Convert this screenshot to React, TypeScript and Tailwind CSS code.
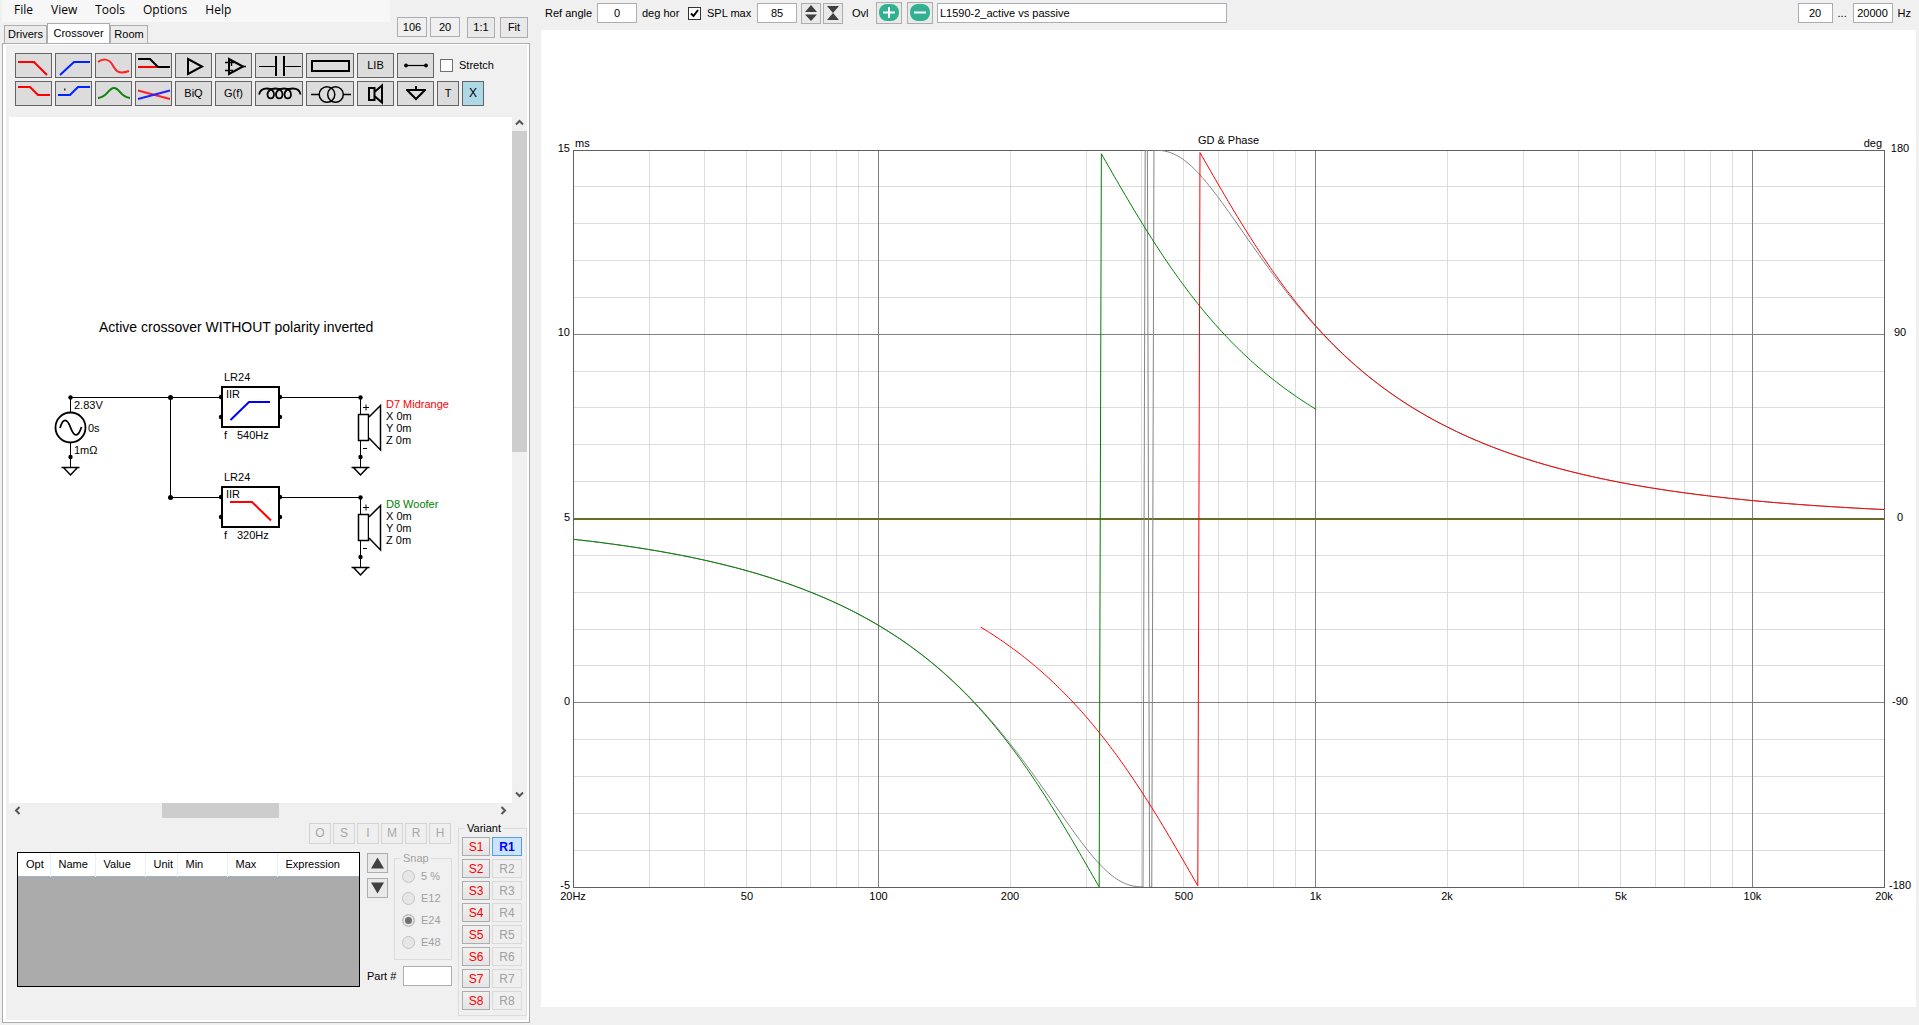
import React from 'react';

type Point = [number, number];

const menus = ['File', 'View', 'Tools', 'Options', 'Help'];
const modes = ['O', 'S', 'I', 'M', 'R', 'H'];
const snaps = ['5 %', 'E12', 'E24', 'E48'];
const variants = [1, 2, 3, 4, 5, 6, 7, 8];

const columns = [
  { label: 'Opt', width: 'w-[32px]' },
  { label: 'Name', width: 'w-[45px]' },
  { label: 'Value', width: 'w-[50px]' },
  { label: 'Unit', width: 'w-[32px]' },
  { label: 'Min', width: 'w-[50px]' },
  { label: 'Max', width: 'w-[50px]' },
  { label: 'Expression', width: 'w-auto' },
];

/* ---------- chart maths ---------- */

const F_MIN = 20;
const F_MAX = 20000;
const STEPS = 598;

const freqAt = (i: number) => F_MIN * Math.pow(F_MAX / F_MIN, i / STEPS);
const xPct = (f: number) => (Math.log10(f / F_MIN) / Math.log10(F_MAX / F_MIN)) * 100;
const yPct = (deg: number) => ((180 - deg) / 360) * 100;

const wrap = (deg: number) => {
  let d = deg;
  while (d >= 180) d -= 360;
  while (d < -180.2) d += 360;
  return d;
};

// Phase of a 4th order Linkwitz-Riley section, same for low and high pass
const lrPhase = (f: number, fc: number) => {
  const x = f / fc;
  return (-2 * Math.atan2(Math.SQRT2 * x, 1 - x * x) * 180) / Math.PI;
};

const sumPhase = (f: number) => {
  const lowMag = 1 / (1 + Math.pow(f / 320, 4));
  const highMag = 1 - 1 / (1 + Math.pow(f / 540, 4));
  const a = (lrPhase(f, 320) * Math.PI) / 180;
  const b = (lrPhase(f, 540) * Math.PI) / 180;
  const re = lowMag * Math.cos(a) + highMag * Math.cos(b);
  const im = lowMag * Math.sin(a) + highMag * Math.sin(b);
  return (Math.atan2(im, re) * 180) / Math.PI;
};

function trace(phase: (f: number) => number, from: number, to: number) {
  const pts: Point[] = [];
  for (let i = 0; i <= STEPS; i++) {
    const f = freqAt(i);
    if (f >= from && f <= to) pts.push([xPct(f) * 10, yPct(wrap(phase(f))) * 10]);
  }
  return pts.map(([x, y]) => `${x.toFixed(2)},${y.toFixed(2)}`).join(' ');
}

const decades = [100, 1000, 10000];
const minorFreqs = [10, 100, 1000, 10000]
  .flatMap((dec) => [2, 3, 4, 5, 6, 7, 8, 9].map((m) => m * dec))
  .filter((f) => f > F_MIN && f < F_MAX);

const xLabels: [number, string][] = [
  [20, '20Hz'], [50, '50'], [100, '100'], [200, '200'], [500, '500'],
  [1000, '1k'], [2000, '2k'], [5000, '5k'], [10000, '10k'], [20000, '20k'],
];

const yLabels: [number, string, string][] = [
  [180, '15', '180'],
  [90, '10', '90'],
  [0, '5', '0'],
  [-90, '0', '-90'],
  [-180, '-5', '-180'],
];

function PhaseChart() {
  return (
    <svg
      className="block h-full w-full overflow-visible text-[11px]"
      role="img"
      aria-label="GD & Phase"
    >
      <g shapeRendering="crispEdges" strokeWidth="1">
        {minorFreqs.map((f) => (
          <line key={f} x1={`${xPct(f)}%`} x2={`${xPct(f)}%`} y1="0" y2="100%" stroke="#dcdcdc" />
        ))}
        {Array.from({ length: 19 }, (_, i) => i + 1).filter((i) => i % 5).map((i) => (
          <line key={i} x1="0" x2="100%" y1={`${i * 5}%`} y2={`${i * 5}%`} stroke="#dcdcdc" />
        ))}
        {decades.map((f) => (
          <line key={f} x1={`${xPct(f)}%`} x2={`${xPct(f)}%`} y1="0" y2="100%" stroke="#808080" />
        ))}
        <line x1="0" x2="100%" y1="25%" y2="25%" stroke="#808080" />
        <line x1="0" x2="100%" y1="75%" y2="75%" stroke="#808080" />
        <rect x="0" y="0" width="100%" height="100%" fill="none" stroke="#606060" />
        <line x1="0" x2="100%" y1="50%" y2="50%" stroke="#6b6b28" strokeWidth="2" />
      </g>

      <svg x="0" y="0" width="100%" height="100%" viewBox="0 0 1000 1000"
        preserveAspectRatio="none" fill="none" strokeWidth="1">
        <polyline points={trace(sumPhase, 20, 20000)} stroke="#848484" vectorEffect="non-scaling-stroke" />
        <polyline points={trace((f) => lrPhase(f, 320), 20, 1005)} stroke="#008000" vectorEffect="non-scaling-stroke" />
        <polyline points={trace((f) => lrPhase(f, 540), 171, 20000)} stroke="#ff0000" vectorEffect="non-scaling-stroke" />
      </svg>

      <g fill="#000">
        <text x="50%" y="-6" textAnchor="middle">GD &amp; Phase</text>
        <text x="2" y="-3">ms</text>
        <text x="100%" y="-3" dx="-2" textAnchor="end">deg</text>
        {xLabels.map(([f, label]) => (
          <text key={f} x={`${xPct(f)}%`} y="100%" dy="13" textAnchor="middle">{label}</text>
        ))}
        {yLabels.map(([deg, left, right]) => (
          <React.Fragment key={deg}>
            <text x="-3" y={`${yPct(deg)}%`} dy="2" textAnchor="end">{left}</text>
            <text x="100%" dx="16" y={`${yPct(deg)}%`} dy="2" textAnchor="middle">{right}</text>
          </React.Fragment>
        ))}
      </g>
    </svg>
  );
}

/* ---------- schematic ---------- */

function Ground({ x, y }: { x: number; y: number }) {
  return (
    <g>
      <path d={`M${x} ${y - 27}V${y}`} stroke="#000" />
      <circle cx={x} cy={y - 10} r="2.2" />
      <path d={`M${x - 9} ${y + 0.5}H${x + 9}M${x - 7} ${y + 0.5}L${x} ${y + 8}L${x + 7} ${y + 0.5}`}
        fill="none" stroke="#000" strokeWidth="1.5" />
    </g>
  );
}

function FilterBlock({ y, freq, color, shape }: { y: number; freq: string; color: string; shape: string }) {
  return (
    <g transform={`translate(212 ${y})`}>
      {[11, 31].map((cy) => (
        <React.Fragment key={cy}>
          <circle cx="0" cy={cy} r="2.2" />
          <circle cx="59" cy={cy} r="2.2" />
        </React.Fragment>
      ))}
      <rect x="1" y="1" width="57" height="40" fill="#fff" stroke="#000" strokeWidth="2" />
      <path d={shape} fill="none" stroke={color} strokeWidth="2" />
      <text x="3" y="-5">LR24</text>
      <text x="5" y="12">IIR</text>
      <text x="3" y="53">f</text>
      <text x="16" y="53">{freq}</text>
    </g>
  );
}

function Driver({ y, name, color }: { y: number; name: string; color: string }) {
  return (
    <g transform={`translate(0 ${y})`}>
      <path d="M271 .5H351.5V18" fill="none" stroke="#000" />
      <circle cx="351.5" cy=".5" r="2.2" />
      <Ground x={351.5} y={70} />
      <rect x="349.5" y="17.5" width="10" height="26" fill="#fff" stroke="#000" strokeWidth="1.5" />
      <path d="M360 20L371.5 8.5V53L360 41" fill="#fff" stroke="#000" strokeWidth="1.5" />
      <path d="M354 10.5H360M357 7.5V13.5M354 51.5H358" stroke="#000" />
      <text x="377" y="11" fill={color}>{name}</text>
      <text x="377" y="23">X 0m</text>
      <text x="377" y="35">Y 0m</text>
      <text x="377" y="47">Z 0m</text>
    </g>
  );
}

function Schematic() {
  return (
    <svg width="503" height="686" viewBox="0 0 503 686" className="block text-[11px]">
      <text x="90" y="215" className="text-[14px]">Active crossover WITHOUT polarity inverted</text>
      <path d="M61.5 296V280.5H212M161.5 280.5V380.5H212" fill="none" stroke="#000" />
      <circle cx="61.5" cy="280.5" r="2.2" />
      <circle cx="161.5" cy="280.5" r="2.5" />
      <circle cx="161.5" cy="380.5" r="2.5" />
      <Ground x={61.5} y={350} />
      <circle cx="61.5" cy="310.5" r="15" fill="#fff" stroke="#000" strokeWidth="1.8" />
      <path d="M51 311C54 301 58 301 61.5 310.5S69 321 72.5 310" fill="none" stroke="#000" strokeWidth="1.8" />
      <text x="65" y="292">2.83V</text>
      <text x="79" y="315">0s</text>
      <text x="65" y="337">1mΩ</text>
      <Driver y={280} name="D7 Midrange" color="#ff0000" />
      <Driver y={380} name="D8 Woofer" color="#008000" />
      <FilterBlock y={269} freq="540Hz" color="#0000ff" shape="M9.5 34L28 16H49" />
      <FilterBlock y={369} freq="320Hz" color="#ff0000" shape="M9 16H31L50 34.5" />
    </svg>
  );
}

/* ---------- toolbar ---------- */

function Tool({ label, wide, children }: { label: string; wide?: boolean; children: React.ReactNode }) {
  return (
    <button
      type="button"
      aria-label={label}
      className={`${wide ? 'w-[48px]' : 'w-[37px]'} flex h-[25px] shrink-0 items-center justify-center border border-[#646464] bg-[#dcdcdc]`}
    >
      {children}
    </button>
  );
}

function Glyph({ w = 35, children }: { w?: number; children: React.ReactNode }) {
  return (
    <svg width={w} height="23" viewBox={`0 0 ${w} 23`} fill="none" stroke="#000" strokeWidth="2">
      {children}
    </svg>
  );
}

function Toolbar() {
  return (
    <div className="flex flex-col gap-[3px] pt-2 pl-[9px]">
      <div className="flex gap-[3px]">
        <Tool label="Low pass"><Glyph><path d="M2 8H18L31 21" stroke="#f00" /></Glyph></Tool>
        <Tool label="High pass"><Glyph><path d="M4 21L18 8H34" stroke="#02f" /></Glyph></Tool>
        <Tool label="All pass"><Glyph><path d="M2 8C6 5 12 4 16 10C20 17 22 21 33 17" stroke="#f22" /></Glyph></Tool>
        <Tool label="Shelf">
          <Glyph><path d="M2 13H21" stroke="#f00" /><path d="M2 5H14L22 13H34" /></Glyph>
        </Tool>
        <Tool label="Buffer"><Glyph><path d="M12 5V20L26 12.5Z" /></Glyph></Tool>
        <Tool label="Op amp">
          <Glyph>
            <path d="M13 5V20L27 12.5Z" />
            <path d="M9 8.5H18M9 16.500H17M15.5 6V12M27 12.5H30" strokeWidth="1.4" />
          </Glyph>
        </Tool>
        <Tool label="Capacitor" wide>
          <Glyph w={46}><path d="M3 12.5H20M28 12.5H45" strokeWidth="1.2" /><path d="M20 2V22M28 2V22" /></Glyph>
        </Tool>
        <Tool label="Resistor" wide><Glyph w={46}><rect x="5" y="7" width="37" height="10" /></Glyph></Tool>
        <Tool label="Library">LIB</Tool>
        <Tool label="Wire">
          <Glyph>
            <path d="M7 11.5H28" strokeWidth="1.2" />
            <circle cx="8" cy="11.5" r="1.9" fill="#000" stroke="none" />
            <circle cx="28" cy="11.5" r="1.9" fill="#000" stroke="none" />
          </Glyph>
        </Tool>
        <label className="ml-[3px] flex items-center gap-[6px]">
          <input type="checkbox" className="h-[13px] w-[13px] appearance-none border border-[#707070] bg-white" />
          Stretch
        </label>
      </div>
      <div className="flex gap-[3px]">
        <Tool label="Low shelf"><Glyph><path d="M2 5H14L22 13H34" stroke="#f00" /></Glyph></Tool>
        <Tool label="High shelf">
          <Glyph>
            <path d="M2 13H14L22 5H34" stroke="#02f" />
            <path d="M8 7.5H9.5" stroke="#333" />
          </Glyph>
        </Tool>
        <Tool label="Peak"><Glyph><path d="M2 16C12 15 12 6 18 6S24 15 34 16" stroke="#118011" /></Glyph></Tool>
        <Tool label="Cross">
          <Glyph><path d="M2 8.5L34 17" stroke="#f22" /><path d="M2 17L34 8.500" stroke="#22f" /></Glyph>
        </Tool>
        <Tool label="Biquad">BiQ</Tool>
        <Tool label="Transfer function">G(f)</Tool>
        <Tool label="Inductor" wide>
          <Glyph w={46}>
            <path d="M3 12.5C4 8 8 6.5 11 6.5C16 6.500 18.5 10 18 13C17.5 17.5 12 17.5 11.5 13C11 9 15 6.5 19.5 6.5C24.5 6.5 27 10 26.5 13C26 17.5 20.5 17.5 20 13C19.5 9 23.5 6.5 28 6.5C33 6.5 35.5 10 35 13C34.5 17.5 29 17.5 28.5 13C28 9 32 6.5 36.5 6.5C40 6.500 44 8 44.5 12.5" strokeWidth="1.8" />
          </Glyph>
        </Tool>
        <Tool label="Transformer" wide>
          <Glyph w={46}>
            <g strokeWidth="1.5">
              <circle cx="20" cy="12.5" r="7.8" />
              <circle cx="28.5" cy="12.5" r="7.8" />
              <path d="M4 12.5H12M36 12.5H44" />
            </g>
          </Glyph>
        </Tool>
        <Tool label="Speaker"><Glyph><path d="M11 6H16.500V18H11ZM17 9.5L24 3.5V20.500L17 14.5" /></Glyph></Tool>
        <Tool label="Ground"><Glyph><path d="M8 8H28M9.500 8.5L18 17L26.500 8.5M18 4V8" /></Glyph></Tool>
        <button type="button" className="h-[25px] w-[22px] border border-[#646464] bg-[#dcdcdc]">T</button>
        <button type="button" className="h-[25px] w-[22px] border border-[#646464] bg-[#add8e6] text-[12px]">X</button>
      </div>
    </div>
  );
}

function Chevron({ d }: { d: string }) {
  return (
    <svg width="9" height="9" viewBox="0 0 9 9" fill="none" stroke="#555" strokeWidth="2">
      <path d={d} />
    </svg>
  );
}

/* ---------- parameter area ---------- */

function Parameters() {
  return (
    <div className="flex h-[202px] shrink-0 justify-between">
      <div className="flex flex-col pt-[5px] pl-[11px]">
        <div className="flex justify-end gap-[2px] pr-px">
          {modes.map((m) => (
            <button key={m} type="button" disabled
              className="h-[21px] w-[22px] border border-[#d4d4d4] bg-[#efefef] text-[12px] text-[#a8a8a8]">
              {m}
            </button>
          ))}
        </div>

        <div className="mt-2 flex">
          <div className="h-[135px] w-[343px] border border-black bg-[#ababab]">
            <table className="w-full table-fixed border-collapse">
              <thead>
                <tr className="h-[23px] border-b border-[#a0b4c8] bg-white">
                  {columns.map((c) => (
                    <th key={c.label} scope="col"
                      className={`${c.width} border-r border-[#e5effc] pl-2 text-left font-normal last:border-r-0`}>
                      {c.label}
                    </th>
                  ))}
                </tr>
              </thead>
            </table>
          </div>

          <div className="ml-[7px] flex flex-col">
            <div className="flex gap-[6px]">
              <div className="flex flex-col gap-[5px] pt-px">
                <button type="button" aria-label="Move up"
                  className="flex h-[20px] w-[21px] items-center justify-center border border-[#adadad] bg-[#e9e9e9]">
                  <svg width="13" height="12"><path d="M0 11.5L6.5 .5L13 11.5Z" fill="#404040" /></svg>
                </button>
                <button type="button" aria-label="Move down"
                  className="flex h-[20px] w-[21px] items-center justify-center border border-[#adadad] bg-[#e9e9e9]">
                  <svg width="13" height="12"><path d="M0 .5L6.5 11.5L13 .5Z" fill="#404040" /></svg>
                </button>
              </div>
              <fieldset disabled className="h-[108px] w-[58px] border border-[#dcdcdc] text-[#a0a0a0]">
                <legend className="ml-[6px] px-[2px] leading-[13px]">Snap</legend>
                <div className="flex flex-col gap-[9px] pt-[5px] pl-[7px]">
                  {snaps.map((s) => (
                    <label key={s} className="flex h-[13px] items-center gap-[6px]">
                      <input type="radio" name="snap" defaultChecked={s === 'E24'}
                        className="h-[13px] w-[13px] appearance-none rounded-full border border-[#c4c4c4] bg-[#e6e6e6] checked:bg-[#707070] checked:shadow-[inset_0_0_0_2px_#e6e6e6]" />
                      {s}
                    </label>
                  ))}
                </div>
              </fieldset>
            </div>
            <div className="mt-[6px] flex items-center justify-between">
              <label htmlFor="part">Part #</label>
              <input id="part" type="text" className="h-[20px] w-[49px] border border-[#abadb3] bg-white px-1" />
            </div>
          </div>
        </div>
      </div>

      <fieldset className="mt-1 h-[194px] w-[69px] border border-[#dcdcdc]">
        <legend className="ml-[6px] px-[2px] leading-[13px]">Variant</legend>
        <div className="flex flex-col gap-[3px] pt-[2px] pl-[3px]">
          {variants.map((v) => (
            <div key={v} className="flex gap-[2px]">
              <button type="button"
                className="h-[19px] w-[28px] border border-[#adadad] bg-linear-to-b from-[#f0f0f0] to-[#e5e5e5] text-[12px] leading-none text-[#ff0000]">
                S{v}
              </button>
              <button type="button" disabled={v !== 1}
                className={`h-[19px] w-[30px] border text-[12px] leading-none ${
                  v === 1
                    ? 'border-[#569de5] bg-[#cbe4fb] font-bold text-[#0000ff]'
                    : 'border-[#d9d9d9] bg-[#efefef] text-[#a0a0a0]'
                }`}>
                R{v}
              </button>
            </div>
          ))}
        </div>
      </fieldset>
    </div>
  );
}

function Sidebar() {
  return (
    <aside className="flex w-[530px] shrink-0 flex-col pb-[2px] pl-[2px]">
      <header className="flex h-[43px] shrink-0 justify-between">
        <div className="flex flex-col justify-between">
          <nav className="flex h-[22px] w-[388px] items-center gap-[18px] bg-[#f7f7f7] pb-[2px] pl-3 font-['Open_Sans',sans-serif] text-[12px]">
            {menus.map((m) => (
              <button key={m} type="button" className="leading-none">{m}</button>
            ))}
          </nav>
          <div role="tablist" className="flex items-end pl-[2px]">
            <button role="tab" type="button" aria-selected="false"
              className="h-[18px] w-[43px] border border-b-0 border-[#acacac] bg-[#ececec]">Drivers</button>
            <button role="tab" type="button" aria-selected="true"
              className="h-[20px] w-[63px] border border-b-0 border-[#acacac] bg-white">Crossover</button>
            <button role="tab" type="button" aria-selected="false"
              className="h-[18px] w-[38px] border border-b-0 border-[#acacac] bg-[#ececec]">Room</button>
          </div>
        </div>
        <div className="flex shrink-0 items-end gap-[3px] pr-[2px] pb-[5px]">
          <input aria-label="Canvas width" defaultValue="106" className="mb-px h-[20px] w-[30px] border border-[#abadb3] text-center" />
          <input aria-label="Canvas height" defaultValue="20" className="mb-px h-[20px] w-[30px] border border-[#abadb3] text-center" />
          <button type="button" className="ml-1 h-[21px] w-[28px] border border-[#adadad] bg-[#e9e9e9]">1:1</button>
          <button type="button" className="ml-[2px] h-[21px] w-[28px] border border-[#adadad] bg-[#e9e9e9]">Fit</button>
        </div>
      </header>

      <div className="flex flex-1 flex-col border border-[#acacac] bg-white pt-px pr-[2px] pb-[2px] pl-[3px]">
        <div className="flex flex-1 flex-col bg-[#f0f0f0]">
          <Toolbar />
          <div className="mt-2 flex flex-1 pl-[3px]">
            <div className="mt-[3px] min-w-0 flex-1 overflow-hidden bg-white">
              <Schematic />
            </div>
            <div className="flex w-[15px] shrink-0 flex-col items-center">
              <button type="button" aria-label="Scroll up" className="flex h-[17px] items-center"><Chevron d="M1 6.5L4.5 3L8 6.5" /></button>
              <div className="flex w-full flex-1 flex-col">
                <div className="h-[321px] bg-[#cdcdcd]" />
              </div>
              <button type="button" aria-label="Scroll down" className="flex h-[17px] items-center"><Chevron d="M1 2.5L4.5 6L8 2.5" /></button>
            </div>
          </div>
          <div className="mr-[15px] ml-[3px] flex h-[15px] shrink-0">
            <button type="button" aria-label="Scroll left" className="flex w-[17px] items-center justify-center"><Chevron d="M6.5 1L3 4.5L6.5 8" /></button>
            <div className="flex flex-1">
              <div className="ml-[136px] w-[117px] bg-[#cdcdcd]" />
            </div>
            <button type="button" aria-label="Scroll right" className="flex w-[17px] items-center justify-center"><Chevron d="M2.5 1L6 4.5L2.5 8" /></button>
          </div>
          <Parameters />
        </div>
      </div>
    </aside>
  );
}

function TopBar() {
  const field = 'h-[20px] border border-[#abadb3] bg-white text-center';
  return (
    <div className="flex h-[30px] shrink-0 items-center pb-1 pl-1">
      <label htmlFor="angle" className="w-[52px]">Ref angle</label>
      <input id="angle" defaultValue="0" className={`w-[40px] ${field}`} />
      <span className="ml-[5px] w-[46px]">deg hor</span>
      <label className="flex w-[69px] items-center gap-[6px]">
        <span className="relative flex">
          <input type="checkbox" defaultChecked className="h-[13px] w-[13px] appearance-none border border-[#333] bg-white" />
          <svg className="pointer-events-none absolute inset-0" width="13" height="13" fill="none" stroke="#000" strokeWidth="2">
            <path d="M3 6.5L5.5 9L10 3" />
          </svg>
        </span>
        SPL max
      </label>
      <input aria-label="SPL max value" defaultValue="85" className={`w-[40px] ${field}`} />
      <button type="button" aria-label="Expand scale" className="ml-1 flex h-[21px] w-[20px] items-center justify-center border border-[#adadad] bg-[#e9e9e9]">
        <svg width="14" height="16" fill="#404040"><path d="M1 7L7 0L13 7ZM1 9.5L7 16L13 9.5Z" /></svg>
      </button>
      <button type="button" aria-label="Compress scale" className="ml-[2px] flex h-[21px] w-[20px] items-center justify-center border border-[#adadad] bg-[#e9e9e9]">
        <svg width="14" height="16" fill="#404040"><path d="M1 1H13L7 8ZM7 8L13 15H1Z" /></svg>
      </button>
      <label htmlFor="overlay" className="ml-[9px] w-[24px]">Ovl</label>
      <button type="button" aria-label="Add overlay" className="flex h-[22px] w-[26px] items-center justify-center border border-[#adadad] bg-[#e9e9e9]">
        <svg width="20" height="18"><rect width="20" height="17" rx="8" fill="#31b092" /><path d="M4 8.5H16M10 3V14" stroke="#fff" strokeWidth="2" /></svg>
      </button>
      <button type="button" aria-label="Remove overlay" className="ml-[5px] flex h-[22px] w-[26px] items-center justify-center border border-[#adadad] bg-[#e9e9e9]">
        <svg width="20" height="18"><rect width="20" height="17" rx="8" fill="#31b092" /><path d="M4 8.5H16" stroke="#fff" strokeWidth="2" /></svg>
      </button>
      <input id="overlay" defaultValue="L1590-2_active vs passive" className="ml-1 h-[20px] w-[290px] border border-[#abadb3] bg-white px-[2px]" />
      <div className="ml-auto flex items-center gap-[5px] pr-2">
        <input aria-label="Lowest frequency" defaultValue="20" className={`w-[35px] ${field}`} />
        <span className="w-[10px]">...</span>
        <input aria-label="Highest frequency" defaultValue="20000" className={`w-[40px] ${field}`} />
        <span>Hz</span>
      </div>
    </div>
  );
}

export default function App() {
  return (
    <div className="flex min-h-screen bg-[#f0f0f0] font-['Liberation_Sans',Arial,sans-serif] text-[11px] leading-[13px] text-black">
      <Sidebar />
      <main className="flex min-w-0 flex-1 flex-col pb-[18px] pl-[11px]">
        <TopBar />
        <section className="mr-[3px] flex flex-1 flex-col bg-white pt-[120px] pr-[32px] pb-[120px] pl-[32px]">
          <div className="grid flex-1">
            <PhaseChart />
          </div>
        </section>
      </main>
    </div>
  );
}
